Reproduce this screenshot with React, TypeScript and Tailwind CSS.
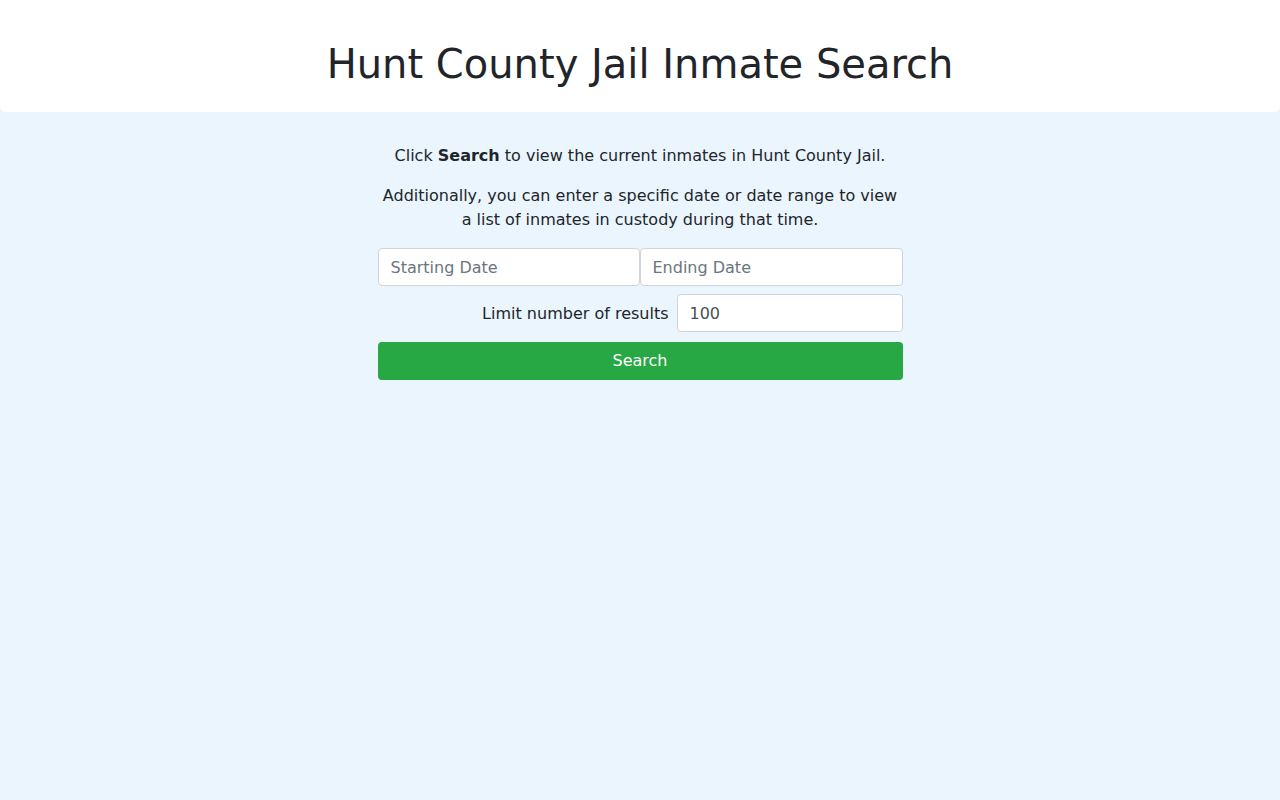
import React, { useState } from 'react';

// Inmate search landing page
const App: React.FC = () => {
    const [startDate, setStartDate] = useState<string>('');
    const [endDate, setEndDate] = useState<string>('');
    const [limit, setLimit] = useState<string>('100');

    const inputClass =
        'h-[38px] px-3 text-base text-[#495057] bg-white border border-[#ced4da] rounded-[4px] placeholder:text-[#6c757d] outline-none';

    return (
        <div
            className="min-h-screen bg-[#ebf5fe] text-[#212529]"
            style={{ fontFamily: '"DejaVu Sans", sans-serif' }}
        >
            {/* Header */}
            <div className="bg-white rounded-b-[6px] h-[112px] flex items-center justify-center pt-[16px]">
                <h1 className="text-[40px] leading-[48px] font-normal">Hunt County Jail Inmate Search</h1>
            </div>

            {/* Search form */}
            <div className="w-[525px] mx-auto pt-[32px] text-center text-base leading-6">
                <p className="mb-4">
                    Click <b>Search</b> to view the current inmates in Hunt County Jail.
                </p>
                <p className="mb-4">
                    Additionally, you can enter a specific date or date range to view a list of inmates in custody during that time.
                </p>

                <div className="flex">
                    <input
                        type="text"
                        placeholder="Starting Date"
                        value={startDate}
                        onChange={(e) => setStartDate(e.target.value)}
                        className={inputClass + ' w-[262px]'}
                    />
                    <input
                        type="text"
                        placeholder="Ending Date"
                        value={endDate}
                        onChange={(e) => setEndDate(e.target.value)}
                        className={inputClass + ' w-[263px]'}
                    />
                </div>

                <div className="flex items-center justify-end mt-2">
                    <label className="mr-[8px] mt-[2px]">Limit number of results</label>
                    <input
                        type="text"
                        value={limit}
                        onChange={(e) => setLimit(e.target.value)}
                        className={inputClass + ' w-[226px] text-left'}
                    />
                </div>

                <button
                    type="button"
                    className="mt-[10px] w-full h-[38px] bg-[#28a745] text-white rounded-[4px] text-base"
                >
                    Search
                </button>
            </div>
        </div>
    );
};

export default App;
